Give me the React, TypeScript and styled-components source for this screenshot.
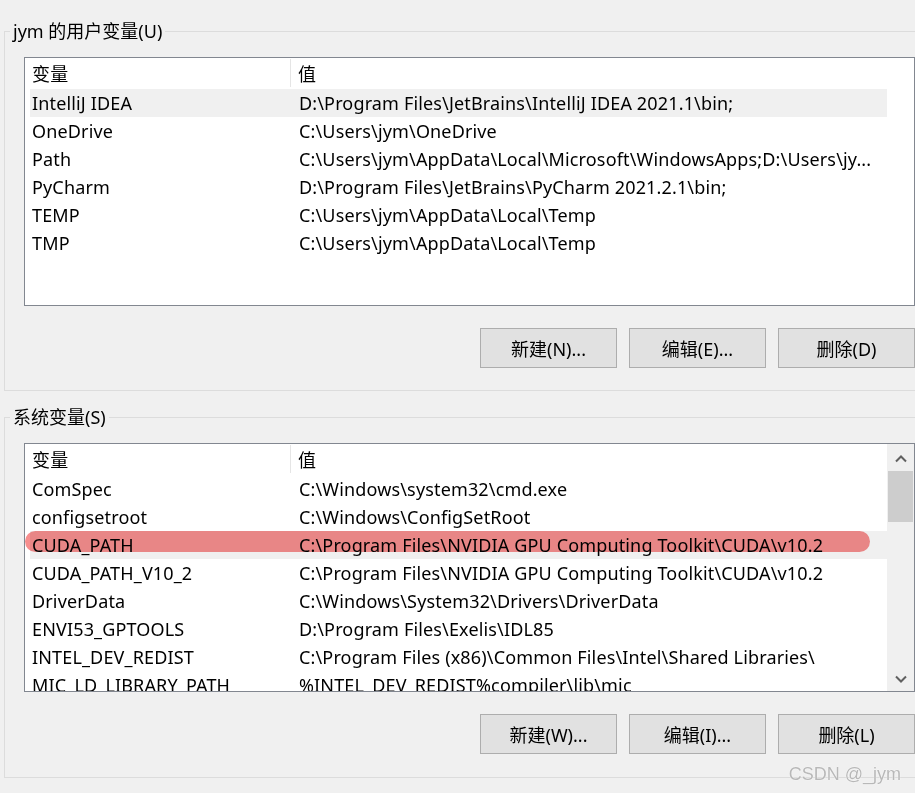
import styled, { createGlobalStyle } from "styled-components";

const GlobalStyle = createGlobalStyle`
  html, body {
    margin: 0;
    padding: 0;
    background: #f0f0f0;
  }
  * {
    box-sizing: border-box;
  }
`;

const Page = styled.div`
  position: relative;
  width: 915px;
  height: 793px;
  overflow: hidden;
  background: #f0f0f0;
  padding-top: 19px;
  font-family: "Noto Sans", "Noto Sans CJK SC", sans-serif;
  font-size: 18px;
  color: #000;
`;

const Group = styled.fieldset<{ $gapTop: number; $padBottom: number }>`
  margin: ${(p) => p.$gapTop}px 0 0 4px;
  padding: 14px 0 ${(p) => p.$padBottom}px 0;
  border: 1px solid #dcdcdc;
  border-right: none;
  min-width: 0;
`;

const Legend = styled.legend`
  margin-left: 5px;
  padding: 0 3px;
  line-height: 24px;
`;

const ListView = styled.div`
  margin-left: 19px;
  height: 249px;
  border: 1px solid #828790;
  background: #fff;
  display: flex;
  overflow: hidden;
`;

const ListContent = styled.div`
  flex: 0 0 862px;
  padding-left: 5px;
  letter-spacing: 0.15px;
`;

const HeaderRow = styled.div`
  display: flex;
  height: 31px;
  align-items: stretch;
`;

const HeaderCell = styled.div<{ $first?: boolean }>`
  display: flex;
  align-items: center;
  margin: 1px 0 2px;
  padding-left: ${(p) => (p.$first ? 2 : 7)}px;
  width: ${(p) => (p.$first ? "261px" : "auto")};
  flex: ${(p) => (p.$first ? "none" : 1)};
  border-right: ${(p) => (p.$first ? "1px solid #e5e5e5" : "none")};
`;

const Row = styled.div<{ $selected?: boolean }>`
  position: relative;
  display: grid;
  grid-template-columns: 267px 1fr;
  height: 28px;
  line-height: 29px;
  background: ${(p) => (p.$selected ? "#f0f0f0" : "transparent")};
  white-space: nowrap;
`;

const Cell = styled.div`
  padding-left: 2px;
  overflow: hidden;
`;

const Mark = styled.div`
  position: absolute;
  left: -5px;
  top: 0;
  width: 845px;
  height: 21px;
  border-radius: 11px;
  background: #f78e8e;
  mix-blend-mode: multiply;
  pointer-events: none;
`;

const ScrollBar = styled.div`
  flex: 1;
  display: flex;
  flex-direction: column;
  background: #f0f0f0;
`;

const ScrollArrow = styled.div`
  height: 27px;
  display: flex;
  align-items: center;
  justify-content: center;
  padding-top: 3px;
`;

const Thumb = styled.div`
  height: 51px;
  margin: 0 1px;
  background: #cdcdcd;
`;

const Track = styled.div`
  flex: 1;
`;

const ButtonRow = styled.div`
  display: flex;
  justify-content: flex-end;
  gap: 12px;
  margin-top: 22px;
`;

const Button = styled.button`
  width: 137px;
  height: 40px;
  padding: 0;
  background: #e1e1e1;
  border: 1px solid #adadad;
  font-family: inherit;
  font-size: 18px;
  color: #000;
`;

const Watermark = styled.div`
  position: absolute;
  right: 14px;
  bottom: 8px;
  font-family: "Liberation Sans", Arial, sans-serif;
  font-size: 18px;
  color: #b8b8b8;
  text-shadow: 0 0 1px #fff, 0 0 1px #fff;
`;

interface EnvVar {
  name: string;
  value: string;
  selected?: boolean;
  marked?: boolean;
}

const userVars: EnvVar[] = [
  { name: "IntelliJ IDEA", value: "D:\\Program Files\\JetBrains\\IntelliJ IDEA 2021.1\\bin;", selected: true },
  { name: "OneDrive", value: "C:\\Users\\jym\\OneDrive" },
  { name: "Path", value: "C:\\Users\\jym\\AppData\\Local\\Microsoft\\WindowsApps;D:\\Users\\jy..." },
  { name: "PyCharm", value: "D:\\Program Files\\JetBrains\\PyCharm 2021.2.1\\bin;" },
  { name: "TEMP", value: "C:\\Users\\jym\\AppData\\Local\\Temp" },
  { name: "TMP", value: "C:\\Users\\jym\\AppData\\Local\\Temp" },
];

const systemVars: EnvVar[] = [
  { name: "ComSpec", value: "C:\\Windows\\system32\\cmd.exe" },
  { name: "configsetroot", value: "C:\\Windows\\ConfigSetRoot" },
  { name: "CUDA_PATH", value: "C:\\Program Files\\NVIDIA GPU Computing Toolkit\\CUDA\\v10.2", selected: true, marked: true },
  { name: "CUDA_PATH_V10_2", value: "C:\\Program Files\\NVIDIA GPU Computing Toolkit\\CUDA\\v10.2" },
  { name: "DriverData", value: "C:\\Windows\\System32\\Drivers\\DriverData" },
  { name: "ENVI53_GPTOOLS", value: "D:\\Program Files\\Exelis\\IDL85" },
  { name: "INTEL_DEV_REDIST", value: "C:\\Program Files (x86)\\Common Files\\Intel\\Shared Libraries\\" },
  { name: "MIC_LD_LIBRARY_PATH", value: "%INTEL_DEV_REDIST%compiler\\lib\\mic" },
];

const Chevron = ({ down }: { down?: boolean }) => (
  <svg width="12" height="8" viewBox="0 0 12 8">
    <polyline
      points={down ? "1,1.5 6,6.5 11,1.5" : "1,6.5 6,1.5 11,6.5"}
      fill="none"
      stroke="#606060"
      strokeWidth="2"
    />
  </svg>
);

const VarList = ({ vars, scroll }: { vars: EnvVar[]; scroll?: boolean }) => (
  <ListView>
    <ListContent>
      <HeaderRow>
        <HeaderCell $first>变量</HeaderCell>
        <HeaderCell>值</HeaderCell>
      </HeaderRow>
      {vars.map((v) => (
        <Row key={v.name} $selected={v.selected}>
          <Cell>{v.name}</Cell>
          <Cell>{v.value}</Cell>
          {v.marked && <Mark />}
        </Row>
      ))}
    </ListContent>
    {scroll && (
      <ScrollBar>
        <ScrollArrow>
          <Chevron />
        </ScrollArrow>
        <Thumb />
        <Track />
        <ScrollArrow>
          <Chevron down />
        </ScrollArrow>
      </ScrollBar>
    )}
  </ListView>
);

const App = () => {
  return (
    <Page>
      <GlobalStyle />
      <Group $gapTop={0} $padBottom={22}>
        <Legend>jym 的用户变量(U)</Legend>
        <VarList vars={userVars} />
        <ButtonRow>
          <Button>新建(N)...</Button>
          <Button>编辑(E)...</Button>
          <Button>删除(D)</Button>
        </ButtonRow>
      </Group>
      <Group $gapTop={14} $padBottom={23}>
        <Legend>系统变量(S)</Legend>
        <VarList vars={systemVars} scroll />
        <ButtonRow>
          <Button>新建(W)...</Button>
          <Button>编辑(I)...</Button>
          <Button>删除(L)</Button>
        </ButtonRow>
      </Group>
      <Watermark>CSDN @_jym</Watermark>
    </Page>
  );
};

export default App;
